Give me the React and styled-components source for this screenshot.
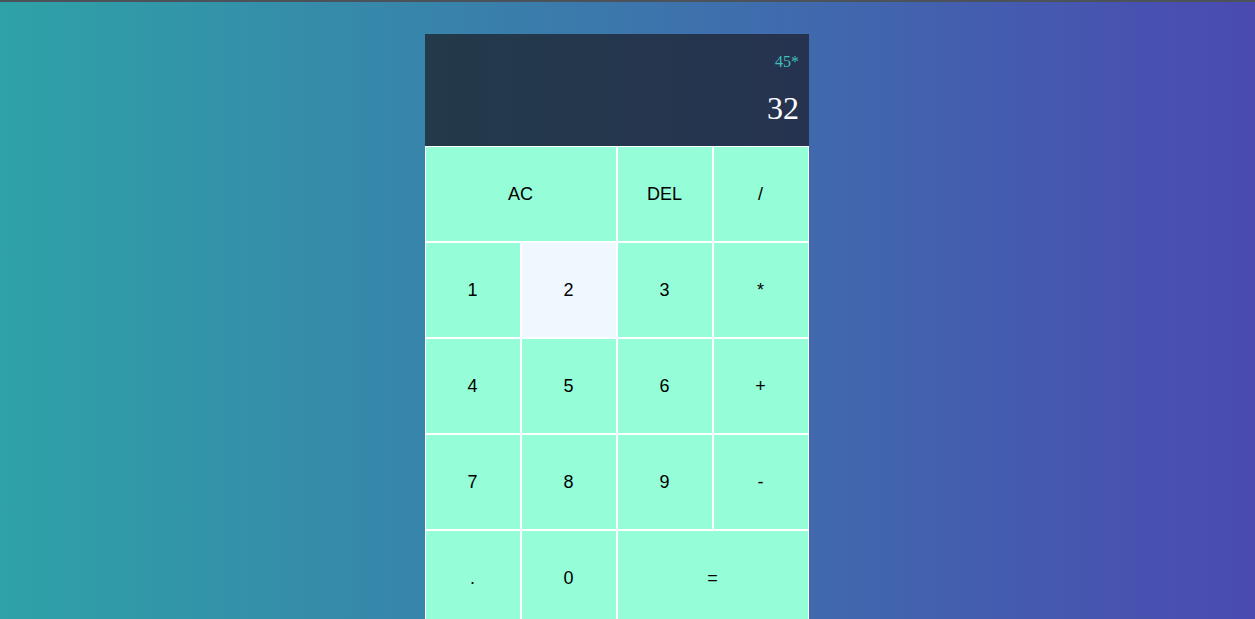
import styled, { createGlobalStyle } from "styled-components";

const GlobalStyle = createGlobalStyle`
  *, *::before, *::after {
    box-sizing: border-box;
  }

  html, body {
    margin: 0;
    padding: 0;
    height: 100%;
    overflow: hidden;
  }

  body {
    border-top: 2px solid #4c525a;
    background: linear-gradient(to right, #2ea2a7, #4a4ab1);
    font-family: "Liberation Sans", Arial, sans-serif;
  }
`;

const Page = styled.div`
  display: flex;
  justify-content: center;
  padding: 32px 21px 0 0;
`;

const CalculatorGrid = styled.div`
  display: grid;
  grid-template-columns: repeat(4, 96px);
  grid-template-rows: 112px repeat(5, 96px);
`;

const Output = styled.div`
  grid-column: 1 / -1;
  display: flex;
  flex-direction: column;
  align-items: flex-end;
  justify-content: space-around;
  padding: 10px;
  background: linear-gradient(to right, #233a4a, #263350);
  font-family: "Liberation Serif", "Times New Roman", serif;
  word-break: break-all;
`;

const PreviousOperand = styled.div`
  color: #3fbfba;
  font-family: "Liberation Serif", "Times New Roman", serif;
  font-size: 16px;
`;

const CurrentOperand = styled.div`
  color: #ffffff;
  font-family: "Liberation Serif", "Times New Roman", serif;
  font-size: 32px;
`;

const Key = styled.button`
  grid-column: ${({ $span }) => ($span ? `span ${$span}` : "auto")};
  border: 1px solid #ffffff;
  outline: none;
  background-color: ${({ $active }) => ($active ? "#f0f8ff" : "#95fdd8")};
  color: #000000;
  font-family: "Liberation Sans", Arial, sans-serif;
  font-size: 18px;
  cursor: pointer;
  padding: 0 1px 0 0;

  &:hover {
    background-color: #f0f8ff;
  }
`;

const keys = [
  { label: "AC", span: 2 },
  { label: "DEL" },
  { label: "/" },
  { label: "1" },
  { label: "2", active: true },
  { label: "3" },
  { label: "*" },
  { label: "4" },
  { label: "5" },
  { label: "6" },
  { label: "+" },
  { label: "7" },
  { label: "8" },
  { label: "9" },
  { label: "-" },
  { label: "." },
  { label: "0" },
  { label: "=", span: 2 },
];

const App = () => {
  return (
    <>
      <GlobalStyle />
      <Page>
        <CalculatorGrid>
          <Output>
            <PreviousOperand>45*</PreviousOperand>
            <CurrentOperand>32</CurrentOperand>
          </Output>
          {keys.map((k) => (
            <Key key={k.label} $span={k.span} $active={k.active}>
              {k.label}
            </Key>
          ))}
        </CalculatorGrid>
      </Page>
    </>
  );
};

export default App;
